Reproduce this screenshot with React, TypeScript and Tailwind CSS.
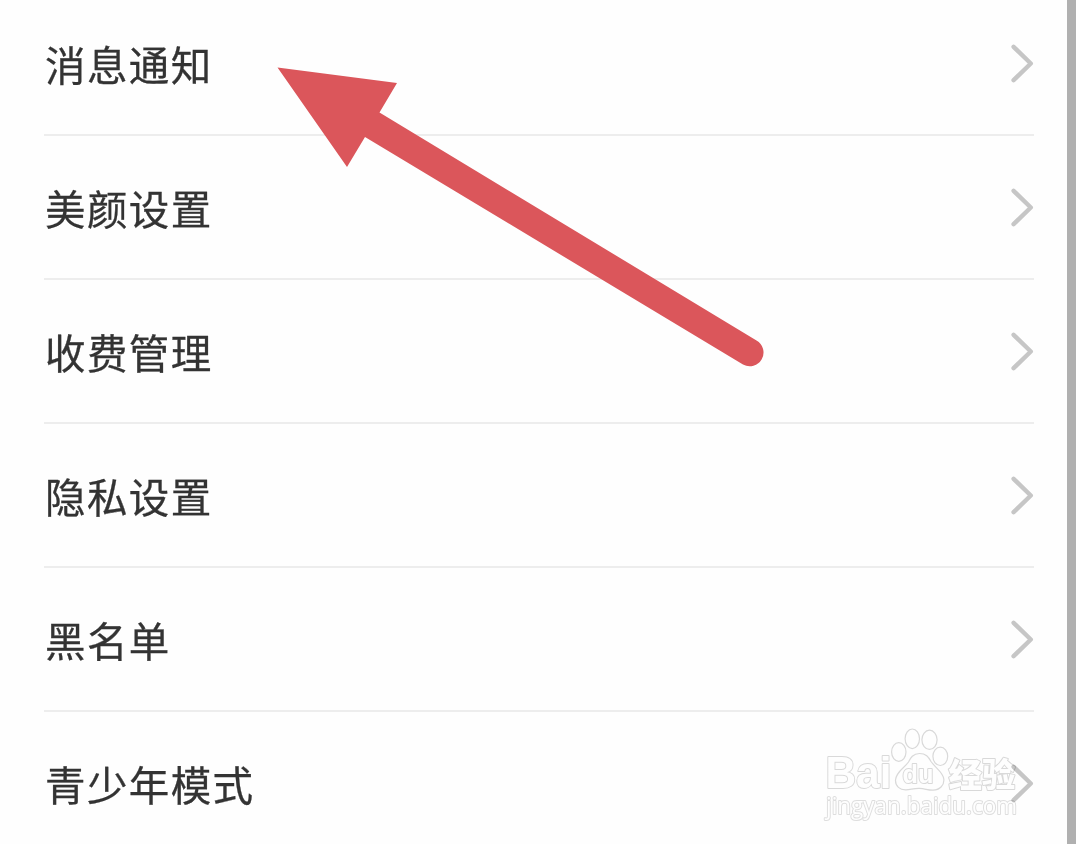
import React from 'react';

const items = ['消息通知', '美颜设置', '收费管理', '隐私设置', '黑名单', '青少年模式'];

function Chevron() {
  return (
    <svg width="24" height="40" viewBox="0 0 24 40" fill="none" className="shrink-0">
      <path d="M3.6 3.8L20.8 20.5L3.6 37.2" stroke="#c6c6c6" strokeWidth="4.4" strokeLinecap="round" strokeLinejoin="round" />
    </svg>
  );
}

function Row({ label }: { label: string }) {
  return (
    <li className="flex h-36 shrink-0 items-center justify-between border-b-2 border-[#ededed]">
      <span className="pl-px pt-0.5 text-[40.5px] leading-none tracking-[1.4px] text-[#333333] [-webkit-text-stroke:0.3px_#333333]">{label}</span>
      <Chevron />
    </li>
  );
}

function Arrow() {
  return (
    <svg width="490" height="304" viewBox="276 65 490 304" className="absolute left-[276px] top-[65px]">
      <path
        d="M277.5 67.5L397 83L379.5 112.5L756.5 340.5A13.7 13.7 0 0 1 743 364.5L365 137L347 167Z"
        fill="#db565b"
      />
    </svg>
  );
}

function Watermark() {
  return (
    <svg
      width="204"
      height="100"
      viewBox="820 725 204 100"
      className="absolute left-[820px] top-[725px] mix-blend-multiply"
      fill="#ffffff"
      stroke="#dadada"
      strokeWidth="1.2"
      strokeLinejoin="round"
    >
      <ellipse cx="898.8" cy="752" rx="7.2" ry="9.3" />
      <ellipse cx="912.3" cy="738.8" rx="7.2" ry="9.8" />
      <ellipse cx="929.5" cy="739.8" rx="7.6" ry="9.6" />
      <ellipse cx="940.3" cy="756.3" rx="7.4" ry="9.2" />
      <path d="M919.5 753.5C913 753.5 910.5 758 908.5 762C905 767.5 896 771.5 895.5 780C895.2 786.5 900 790 906 789.8C911 789.5 914 788.2 919.5 788.4C925 788.6 928 790.4 933 790.2C940 790 944.5 785 943.8 779C943 772 936 768.5 931 761.5C928.5 757 926 753.5 919.5 753.5Z" />
      <g strokeWidth="2" paintOrder="stroke">
        <text x="825.5" y="788" fontSize="43.5" fontWeight="700" fontFamily="'Liberation Sans', sans-serif" textLength="66" lengthAdjust="spacingAndGlyphs">Bai</text>
        <text x="902.5" y="783" fontSize="26" fontWeight="700" fontFamily="'Liberation Sans', sans-serif" textLength="31" lengthAdjust="spacingAndGlyphs">du</text>
        <text x="948.5" y="786.5" fontSize="33.5" fontWeight="900" fontFamily="'Noto Sans CJK SC', sans-serif">经验</text>
        <text x="826" y="814" fontSize="23" stroke="#dfdfdf" fontWeight="500" fontFamily="'Open Sans', sans-serif" textLength="191" lengthAdjust="spacingAndGlyphs">
          jingyan.baidu.com
        </text>
      </g>
    </svg>
  );
}

export default function App() {
  return (
    <div className="relative flex h-[844px] w-[1076px] overflow-hidden bg-[#fefefe] font-['Noto_Sans_CJK_SC',sans-serif]">
      <ul className="-mt-2 flex flex-1 flex-col pl-11 pr-[33px]">
        {items.map((label) => (
          <Row key={label} label={label} />
        ))}
      </ul>
      <div className="w-[9px] bg-[#b0b0b0]" />
      <Arrow />
      <Watermark />
    </div>
  );
}
